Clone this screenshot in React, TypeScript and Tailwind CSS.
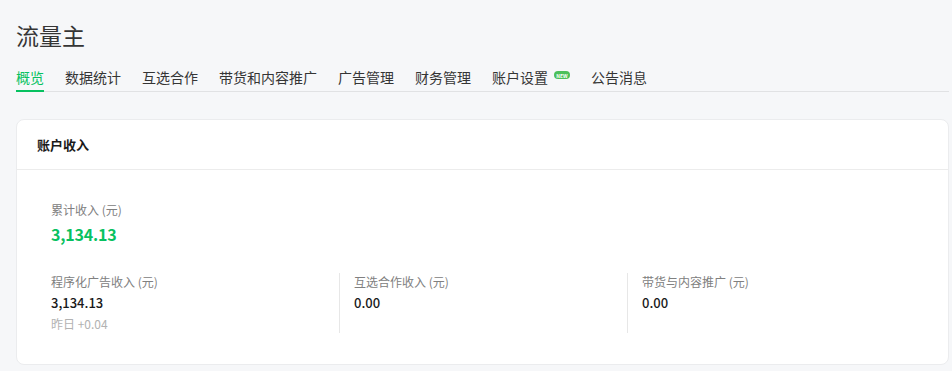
const tabs = ['概览', '数据统计', '互选合作', '带货和内容推广', '广告管理', '财务管理', '账户设置', '公告消息'];

const cols = [
  { label: '程序化广告收入 (元)', value: '3,134.13', sub: '昨日 +0.04' },
  { label: '互选合作收入 (元)', value: '0.00' },
  { label: '带货与内容推广 (元)', value: '0.00' },
];

export default function App() {
  return (
    <div
      className="min-h-[371px] w-full bg-[#f6f7f9] pl-4 pr-[3px] text-[#353535]"
      style={{ fontFamily: '"Noto Sans CJK SC", "Noto Sans", sans-serif' }}
    >
      <div className="pt-[19px] text-[23px] leading-8 text-[#353535]">流量主</div>

      <div className="mt-4 flex items-start gap-[21px] border-b border-[#e1e2e4]">
        {tabs.map((t, i) => (
          <div
            key={t}
            className={`-mb-px flex items-start pb-[3px] text-[14px] leading-5 ${
              i === 0 ? 'border-b-2 border-[#07c160] text-[#07c160]' : 'border-b-2 border-transparent text-[#353535]'
            }`}
          >
            <span>{t}</span>
            {t === '账户设置' ? (
              <span className="ml-[6px] mt-[4px] flex h-[8px] w-[16px] items-center justify-center rounded-full bg-[#4bbf5b] text-[5px] font-bold leading-none text-white">
                NEW
              </span>
            ) : null}
          </div>
        ))}
      </div>

      <div className="mt-[27px] rounded-lg border border-[#ebecee] bg-white">
        <div className="flex h-[50px] items-center border-b border-[#ececec] pl-5 text-[13px] font-semibold text-[#1a1a1a]">
          账户收入
        </div>

        <div className="pl-[34px] pb-[31px] pt-[31px]">
          <div className="text-[12px] leading-[17px] text-[#808080]">累计收入 (元)</div>
          <div className="mt-[2px] text-[16px] font-semibold leading-7 tracking-[-0.2px] text-[#07c160]">3,134.13</div>

          <div className="mt-[25px] flex">
            {cols.map((c, i) => (
              <div
                key={c.label}
                className={`h-[60px] w-[288px] ${i === 0 ? '' : 'border-l border-[#e7e7e7] pl-[14px]'}`}
              >
                <div className="text-[12px] leading-[17px] text-[#808080]">{c.label}</div>
                <div className="mt-[3px] text-[13px] font-medium leading-5 text-[#1a1a1a]">{c.value}</div>
                {c.sub ? <div className="mt-[2px] text-[12px] leading-[17px] text-[#b2b2b2]">{c.sub}</div> : null}
              </div>
            ))}
          </div>
        </div>
      </div>
    </div>
  );
}
